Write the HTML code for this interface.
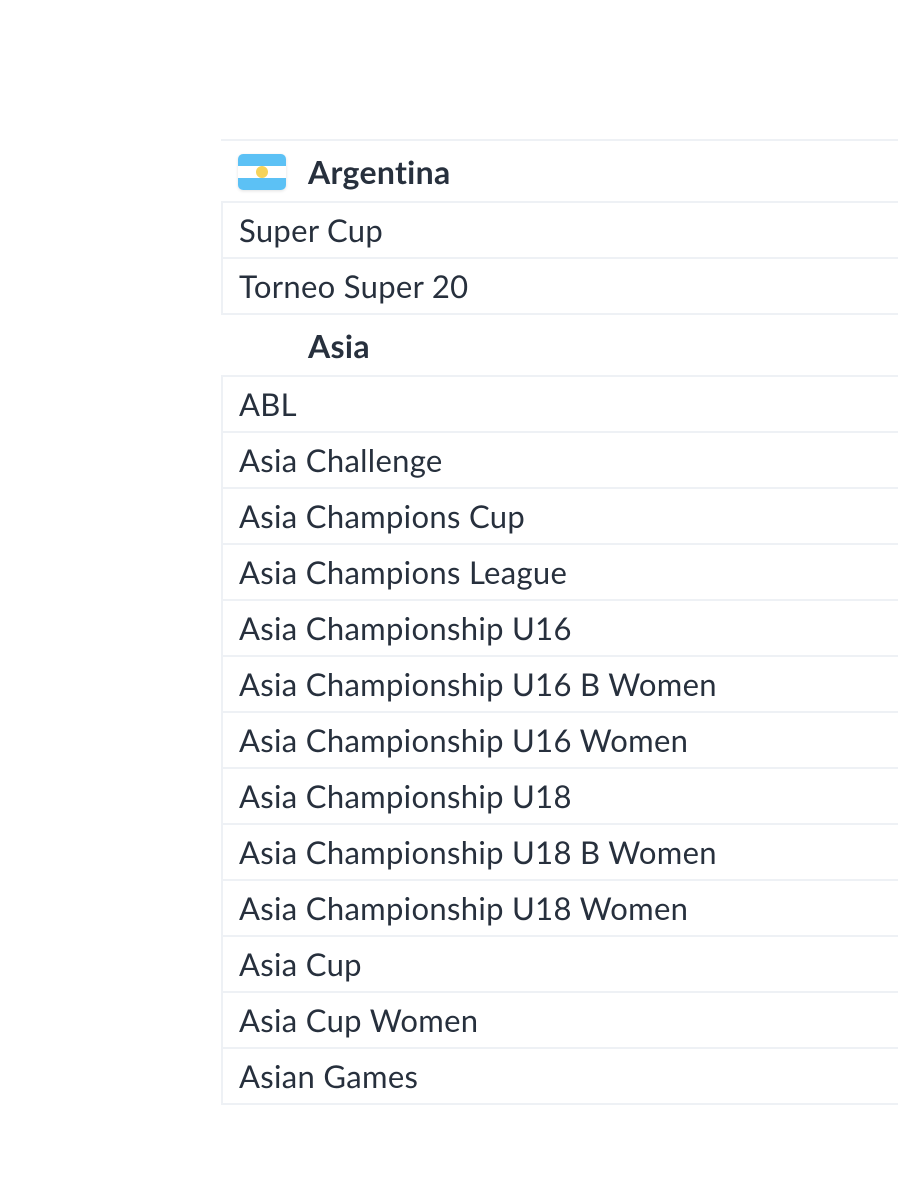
<!DOCTYPE html>
<html><head><meta charset="utf-8"><style>
html,body{margin:0;padding:0;background:#fff;width:898px;height:1178px;overflow:hidden}
body{font-family:"Lato","Liberation Sans",sans-serif;color:#27303d;font-variant-ligatures:none}
.wrap{position:absolute;left:221px;top:139px;width:677px}
.hdr{height:62px;border-top:2px solid #eef1f5;box-sizing:border-box;position:relative}
.hdr span{position:absolute;left:87px;top:11px;font-weight:bold;font-size:32px;letter-spacing:0.3px}
.row{height:56px;border:2px solid #eef1f5;border-right:none;border-bottom:none;box-sizing:border-box;font-size:31px;padding-left:16px;line-height:54px;letter-spacing:0.32px}
.last{border-bottom:2px solid #eef1f5;height:58px}
.flag{position:absolute;left:17px;top:13px;width:48px;height:36px;border-radius:5px;overflow:hidden;background:linear-gradient(#5cc1f5 0 33%,#fff 33% 67%,#5cc1f5 67%);box-shadow:0 1px 3px rgba(0,0,0,.12)}
.flag i{position:absolute;left:18px;top:12px;width:12px;height:12px;border-radius:50%;background:#f6d35a}
</style></head><body>
<div class="wrap">
<div class="hdr"><div class="flag"><i></i></div><span>Argentina</span></div>
<div class="row">Super Cup</div>
<div class="row last">Torneo Super 20</div>
<div class="hdr" style="border-top:none;height:60px"><span style="top:11px">Asia</span></div>
<div class="row">ABL</div>
<div class="row">Asia Challenge</div>
<div class="row">Asia Champions Cup</div>
<div class="row">Asia Champions League</div>
<div class="row">Asia Championship U16</div>
<div class="row">Asia Championship U16 B Women</div>
<div class="row">Asia Championship U16 Women</div>
<div class="row">Asia Championship U18</div>
<div class="row">Asia Championship U18 B Women</div>
<div class="row">Asia Championship U18 Women</div>
<div class="row">Asia Cup</div>
<div class="row">Asia Cup Women</div>
<div class="row last">Asian Games</div>
</div>
</body></html>
